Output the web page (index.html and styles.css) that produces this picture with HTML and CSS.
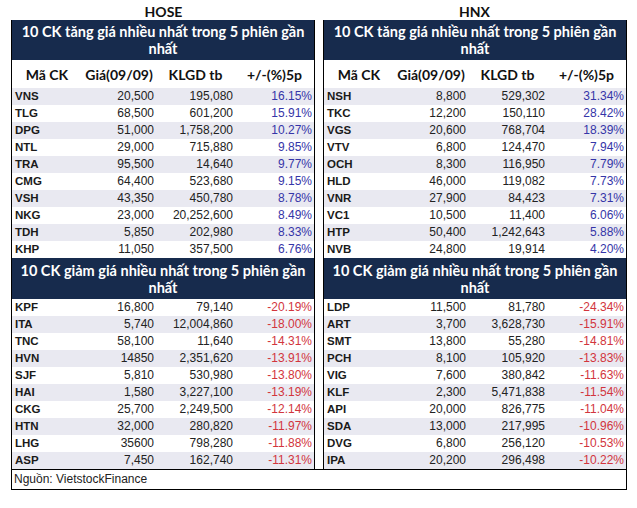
FILE: index.html
```html
<!DOCTYPE html>
<html lang="vi">
<head>
<meta charset="utf-8">
<title>Top CK 5 phiên</title>
<link rel="stylesheet" href="styles.css">
</head>
<body>
<div class="page">
  <div class="heads">
    <div class="exch">HOSE</div>
    <div class="exch">HNX</div>
  </div>
  <div class="frame">
    <div class="cols">
      <section class="panel">
        <div class="title">10 CK tăng giá nhiều nhất trong 5 phiên gần<br>nhất</div>
        <div class="colhead"><span>Mã CK</span><span>Giá(09/09)</span><span>KLGD tb</span><span>+/-(%)5p</span></div>
        <div class="rows up">
          <div class="row"><b>VNS</b><span>20,500</span><span>195,080</span><span class="pct">16.15%</span></div>
          <div class="row"><b>TLG</b><span>68,500</span><span>601,200</span><span class="pct">15.91%</span></div>
          <div class="row"><b>DPG</b><span>51,000</span><span>1,758,200</span><span class="pct">10.27%</span></div>
          <div class="row"><b>NTL</b><span>29,000</span><span>715,880</span><span class="pct">9.85%</span></div>
          <div class="row"><b>TRA</b><span>95,500</span><span>14,640</span><span class="pct">9.77%</span></div>
          <div class="row"><b>CMG</b><span>64,400</span><span>523,680</span><span class="pct">9.15%</span></div>
          <div class="row"><b>VSH</b><span>43,350</span><span>450,780</span><span class="pct">8.78%</span></div>
          <div class="row"><b>NKG</b><span>23,000</span><span>20,252,600</span><span class="pct">8.49%</span></div>
          <div class="row"><b>TDH</b><span>5,850</span><span>202,980</span><span class="pct">8.33%</span></div>
          <div class="row"><b>KHP</b><span>11,050</span><span>357,500</span><span class="pct">6.76%</span></div>
        </div>
        <div class="title title2">10 CK giảm giá nhiều nhất trong 5 phiên gần<br>nhất</div>
        <div class="rows down">
          <div class="row"><b>KPF</b><span>16,800</span><span>79,140</span><span class="pct">-20.19%</span></div>
          <div class="row"><b>ITA</b><span>5,740</span><span>12,004,860</span><span class="pct">-18.00%</span></div>
          <div class="row"><b>TNC</b><span>58,100</span><span>11,640</span><span class="pct">-14.31%</span></div>
          <div class="row"><b>HVN</b><span>14850</span><span>2,351,620</span><span class="pct">-13.91%</span></div>
          <div class="row"><b>SJF</b><span>5,810</span><span>530,980</span><span class="pct">-13.80%</span></div>
          <div class="row"><b>HAI</b><span>1,580</span><span>3,227,100</span><span class="pct">-13.19%</span></div>
          <div class="row"><b>CKG</b><span>25,700</span><span>2,249,500</span><span class="pct">-12.14%</span></div>
          <div class="row"><b>HTN</b><span>32,000</span><span>280,820</span><span class="pct">-11.97%</span></div>
          <div class="row"><b>LHG</b><span>35600</span><span>798,280</span><span class="pct">-11.88%</span></div>
          <div class="row"><b>ASP</b><span>7,450</span><span>162,740</span><span class="pct">-11.31%</span></div>
        </div>
      </section>
      <section class="panel panel-r">
        <div class="title">10 CK tăng giá nhiều nhất trong 5 phiên gần<br>nhất</div>
        <div class="colhead"><span>Mã CK</span><span>Giá(09/09)</span><span>KLGD tb</span><span>+/-(%)5p</span></div>
        <div class="rows up">
          <div class="row"><b>NSH</b><span>8,800</span><span>529,302</span><span class="pct">31.34%</span></div>
          <div class="row"><b>TKC</b><span>12,200</span><span>150,110</span><span class="pct">28.42%</span></div>
          <div class="row"><b>VGS</b><span>20,600</span><span>768,704</span><span class="pct">18.39%</span></div>
          <div class="row"><b>VTV</b><span>6,800</span><span>124,470</span><span class="pct">7.94%</span></div>
          <div class="row"><b>OCH</b><span>8,300</span><span>116,950</span><span class="pct">7.79%</span></div>
          <div class="row"><b>HLD</b><span>46,000</span><span>119,082</span><span class="pct">7.73%</span></div>
          <div class="row"><b>VNR</b><span>27,900</span><span>84,423</span><span class="pct">7.31%</span></div>
          <div class="row"><b>VC1</b><span>10,500</span><span>11,400</span><span class="pct">6.06%</span></div>
          <div class="row"><b>HTP</b><span>50,400</span><span>1,242,643</span><span class="pct">5.88%</span></div>
          <div class="row"><b>NVB</b><span>24,800</span><span>19,914</span><span class="pct">4.20%</span></div>
        </div>
        <div class="title title2">10 CK giảm giá nhiều nhất trong 5 phiên gần<br>nhất</div>
        <div class="rows down">
          <div class="row"><b>LDP</b><span>11,500</span><span>81,780</span><span class="pct">-24.34%</span></div>
          <div class="row"><b>ART</b><span>3,700</span><span>3,628,730</span><span class="pct">-15.91%</span></div>
          <div class="row"><b>SMT</b><span>13,800</span><span>55,280</span><span class="pct">-14.81%</span></div>
          <div class="row"><b>PCH</b><span>8,100</span><span>105,920</span><span class="pct">-13.83%</span></div>
          <div class="row"><b>VIG</b><span>7,600</span><span>380,842</span><span class="pct">-11.63%</span></div>
          <div class="row"><b>KLF</b><span>2,300</span><span>5,471,838</span><span class="pct">-11.54%</span></div>
          <div class="row"><b>API</b><span>20,000</span><span>826,775</span><span class="pct">-11.04%</span></div>
          <div class="row"><b>SDA</b><span>13,000</span><span>217,995</span><span class="pct">-10.96%</span></div>
          <div class="row"><b>DVG</b><span>6,800</span><span>256,120</span><span class="pct">-10.53%</span></div>
          <div class="row"><b>IPA</b><span>20,200</span><span>296,498</span><span class="pct">-10.22%</span></div>
        </div>
      </section>
    </div>
    <div class="source">Nguồn: VietstockFinance</div>
  </div>
</div>
</body>
</html>
```

FILE: styles.css
```css
* { box-sizing: border-box; }
html, body { margin: 0; padding: 0; background: #fff; }
body { font-family: "Liberation Sans", Arial, sans-serif; color: #222; }

.page { padding-left: 11px; width: 637px; }

.heads {
  display: grid;
  grid-template-columns: 303px 303px;
  column-gap: 8px;
  margin-left: 1px;
  height: 20px;
}
.exch {
  font-family: Lato, "Open Sans", sans-serif;
  font-weight: 700;
  font-size: 14px;
  line-height: 18px;
  padding-top: 3px;
  text-align: center;
  color: #111;
}

.frame {
  width: 616px;
  border-left: 1px solid #000;
  border-right: 1px solid #000;
  border-bottom: 1px solid #000;
}
.cols {
  display: grid;
  grid-template-columns: 303px 303px;
  column-gap: 8px;
}
.panel { border-right: 1px solid #000; }
.panel-r { border-right: 0; border-left: 1px solid #000; }

.title {
  background: #172b4d;
  color: #fff;
  font-family: Lato, "Open Sans", sans-serif;
  font-weight: 700;
  font-size: 14.5px;
  line-height: 16.5px;
  text-align: center;
  height: 40px;
  padding-top: 4px;
}
.title2 { height: 41px; padding-top: 5px; }

.colhead, .row {
  display: grid;
  grid-template-columns: 70px 74px 79px 79px;
}
.colhead {
  height: 28px;
  font-family: Lato, "Open Sans", sans-serif;
  font-weight: 700;
  font-size: 14px;
  line-height: 29px;
  text-align: center;
  color: #111;
}

.row {
  height: 17px;
  line-height: 17px;
  font-size: 12px;
}
.row > * { text-align: right; padding-right: 2px; white-space: nowrap; }
.row > b {
  text-align: left;
  padding-left: 3px;
  font-size: 11.5px;
  font-weight: 700;
  color: #1a1a1a;
}
.up .row:nth-child(odd) { background: #e9e9f1; }
.down .row:nth-child(even) { background: #e9e9f1; }
.up .pct { color: #3535a8; }
.down .pct { color: #d2353d; }

.source {
  border-top: 1px solid #000;
  height: 20px;
  line-height: 19px;
  font-size: 12px;
  padding-left: 2px;
  color: #222;
}
```
